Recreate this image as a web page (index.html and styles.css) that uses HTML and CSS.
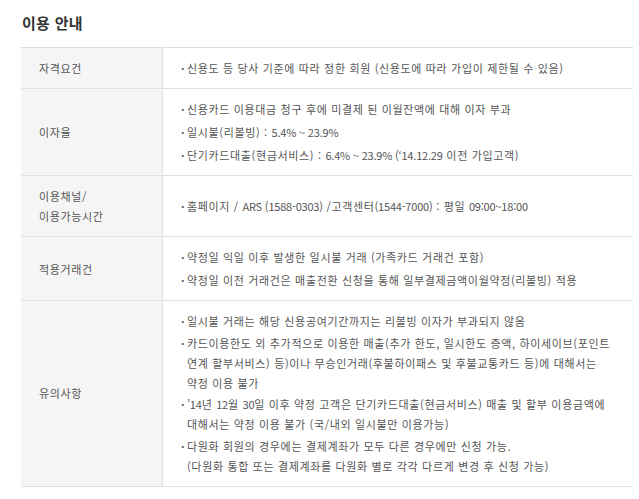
FILE: index.html
```html
<!DOCTYPE html>
<html lang="ko">
<head>
<meta charset="utf-8">
<link rel="stylesheet" href="styles.css">
</head>
<body>
<div class="page">
  <h2 class="title">이용 안내</h2>
  <table class="info">
    <tr>
      <th>자격요건</th>
      <td><ul class="list"><li>신용도 등 당사 기준에 따라 정한 회원 (신용도에 따라 가입이 제한될 수 있음)</li></ul></td>
    </tr>
    <tr>
      <th>이자율</th>
      <td><ul class="list">
        <li>신용카드 이용대금 청구 후에 미결제 된 이월잔액에 대해 이자 부과</li>
        <li>일시불(리볼빙) : <span class="num">5.4% ~ 23.9%</span></li>
        <li>단기카드대출(현금서비스) : <span class="num">6.4% ~ 23.9% (‘14.12.29</span> 이전 가입고객)</li>
      </ul></td>
    </tr>
    <tr>
      <th>이용채널/<br>이용가능시간</th>
      <td><ul class="list"><li>홈페이지 / <span class="num">ARS (1588-0303)</span> /고객센터<span class="num">(1544-7000)</span> : 평일 <span class="num">09:00~18:00</span></li></ul></td>
    </tr>
    <tr>
      <th>적용거래건</th>
      <td><ul class="list">
        <li>약정일 익일 이후 발생한 일시불 거래 (가족카드 거래건 포함)</li>
        <li>약정일 이전 거래건은 매출전환 신청을 통해 일부결제금액이월약정(리볼빙) 적용</li>
      </ul></td>
    </tr>
    <tr>
      <th>유의사항</th>
      <td><ul class="list list-tight">
        <li>일시불 거래는 해당 신용공여기간까지는 리볼빙 이자가 부과되지 않음</li>
        <li>카드이용한도 외 추가적으로 이용한 매출(추가 한도, 일시한도 증액, 하이세이브(포인트<br>연계 할부서비스) 등)이나 무승인거래(후불하이패스 및 후불교통카드 등)에 대해서는<br>약정 이용 불가</li>
        <li><span class="num">’14</span>년 <span class="num">12</span>월 <span class="num">30</span>일 이후 약정 고객은 단기카드대출(현금서비스) 매출 및 할부 이용금액에<br>대해서는 약정 이용 불가 (국/내외 일시불만 이용가능)</li>
        <li>다원화 회원의 경우에는 결제계좌가 모두 다른 경우에만 신청 가능.<br>(다원화 통합 또는 결제계좌를 다원화 별로 각각 다르게 변경 후 신청 가능)</li>
      </ul></td>
    </tr>
  </table>
</div>
</body>
</html>
```

FILE: styles.css
```css
html, body {
  margin: 0;
  padding: 0;
  background: #fff;
}
.page {
  padding: 13px 6px 0 21px;
  font-family: "Noto Sans CJK KR", "Noto Sans", sans-serif;
}
.title {
  margin: 0 0 14px 1px;
  font-size: 15px;
  line-height: 20px;
  font-weight: bold;
  color: #333;
  letter-spacing: 0.3px;
}
.info {
  width: 612px;
  border-collapse: collapse;
  border-top: 1px solid #dcdcdc;
  font-size: 11px;
  letter-spacing: 0.65px;
  color: #555;
}
.info th, .info td {
  border-bottom: 1px solid #e1e1e1;
  vertical-align: middle;
  text-align: left;
  padding: 10px 0 10px 18px;
}
.info th {
  width: 123px;
  background: #f5f5f5;
  border-right: 1px solid #e1e1e1;
  font-weight: normal;
  line-height: 20px;
}
.list {
  list-style: none;
  margin: 0;
  padding: 0;
}
.list li {
  line-height: 20px;
  padding-left: 6px;
  text-indent: -6px;
}
.list li::before {
  content: "·";
  display: inline-block;
  width: 6px;
  text-indent: 0;
  letter-spacing: 0;
  font-weight: bold;
}
.list li + li {
  margin-top: 3px;
}
.list-tight li + li {
  margin-top: 1.5px;
}
.num {
  letter-spacing: -0.2px;
}
```
